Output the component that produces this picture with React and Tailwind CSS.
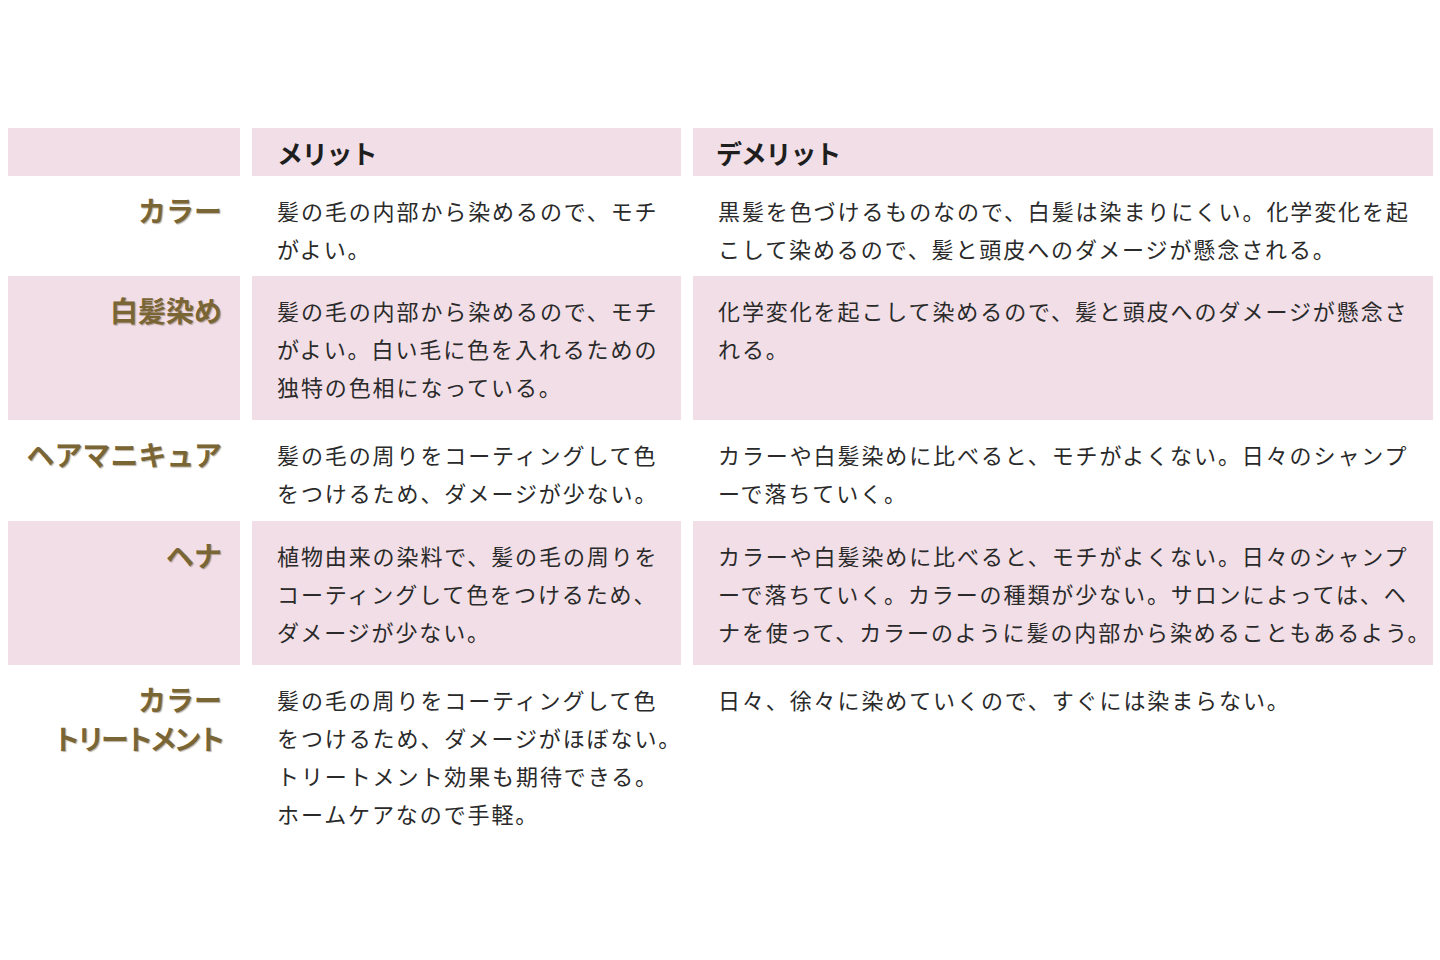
import React from "react";

const rows = [
  {
    label: ["カラー"],
    pink: false,
    h: "h-[100px]",
    merit: ["髪の毛の内部から染めるので、モチ", "がよい。"],
    demerit: [
      "黒髪を色づけるものなので、白髪は染まりにくい。化学変化を起",
      "こして染めるので、髪と頭皮へのダメージが懸念される。",
    ],
  },
  {
    label: ["白髪染め"],
    pink: true,
    h: "h-[144px]",
    merit: [
      "髪の毛の内部から染めるので、モチ",
      "がよい。白い毛に色を入れるための",
      "独特の色相になっている。",
    ],
    demerit: [
      "化学変化を起こして染めるので、髪と頭皮へのダメージが懸念さ",
      "れる。",
    ],
  },
  {
    label: ["ヘアマニキュア"],
    pink: false,
    h: "h-[101px]",
    merit: ["髪の毛の周りをコーティングして色", "をつけるため、ダメージが少ない。"],
    demerit: [
      "カラーや白髪染めに比べると、モチがよくない。日々のシャンプ",
      "ーで落ちていく。",
    ],
  },
  {
    label: ["ヘナ"],
    pink: true,
    h: "h-[144px]",
    merit: [
      "植物由来の染料で、髪の毛の周りを",
      "コーティングして色をつけるため、",
      "ダメージが少ない。",
    ],
    demerit: [
      "カラーや白髪染めに比べると、モチがよくない。日々のシャンプ",
      "ーで落ちていく。カラーの種類が少ない。サロンによっては、ヘ",
      "ナを使って、カラーのように髪の内部から染めることもあるよう。",
    ],
  },
  {
    label: ["カラー", "トリートメント"],
    pink: false,
    h: "h-[175px]",
    merit: [
      "髪の毛の周りをコーティングして色",
      "をつけるため、ダメージがほぼない。",
      "トリートメント効果も期待できる。",
      "ホームケアなので手軽。",
    ],
    demerit: ["日々、徐々に染めていくので、すぐには染まらない。"],
  },
];

const font = { fontFamily: '"Noto Sans CJK JP", "Noto Sans", sans-serif' };

function Lines({ lines }) {
  return (
    <div className="text-[22px] leading-[38px] tracking-[1.9px] text-[#2a2a2a] whitespace-nowrap">
      {lines.map((l, i) => (
        <div key={i}>{l}</div>
      ))}
    </div>
  );
}

export default function App() {
  return (
    <div className="min-h-screen w-[1440px] bg-white pt-[128px] pl-[8px]" style={font}>
      <div className="grid grid-cols-[232px_429px_740px] gap-x-[12px]">
        <div className="h-[48px] bg-[#f1dee7]"></div>
        <div className="h-[48px] bg-[#f1dee7] pl-[25px] flex items-center">
          <span className="text-[26px] font-bold text-[#1e1e1e] tracking-[-1.2px]">メリット</span>
        </div>
        <div className="h-[48px] bg-[#f1dee7] pl-[23px] flex items-center">
          <span className="text-[26px] font-bold text-[#1e1e1e] tracking-[-1.2px]">デメリット</span>
        </div>

        {rows.map((r, i) => {
          const bg = r.pink ? "bg-[#f1dee7]" : "bg-white";
          return (
            <React.Fragment key={i}>
              <div className={`${r.h} ${bg} pr-[18px] pt-[15px] text-right`}>
                {r.label.map((t, j) => (
                  <div
                    key={j}
                    className={`text-[28px] leading-[39px] font-bold text-[#7a6535] [text-shadow:1px_1px_1px_rgba(60,40,10,0.35)] ${
                      t === "トリートメント" ? "tracking-[-3.8px]" : ""
                    }`}
                  >
                    {t}
                  </div>
                ))}
              </div>
              <div className={`${r.h} ${bg} pl-[25px] pt-[15px]`}>
                <Lines lines={r.merit} />
              </div>
              <div className={`${r.h} ${bg} pl-[25px] pt-[15px]`}>
                <Lines lines={r.demerit} />
              </div>
            </React.Fragment>
          );
        })}
      </div>
    </div>
  );
}
